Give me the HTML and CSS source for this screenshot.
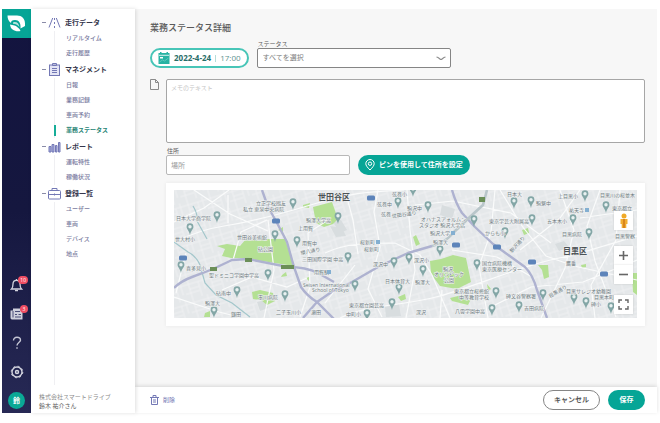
FILE: index.html
```html
<!DOCTYPE html>
<html lang="ja">
<head>
<meta charset="utf-8">
<meta name="viewport" content="width=device-width, initial-scale=1">
<title>業務ステータス詳細</title>
<link rel="stylesheet" href="styles.css">
</head>
<body>
<div class="app">
  <aside class="rail">
    <a class="logo" href="#" aria-label="ホーム">
      <svg width="19" height="19" viewBox="0 0 19 19"><path d="M.5 1.500H10c5 0 8 3.500 8 8V12l-4.500 2.500C14 9 12 6 8 6 5 6 4 7 4 9 1.500 7 .5 4.500.5 1.500z" fill="#fff"/><path d="M3 10.500l4.500 1c2 .5 3.500 2 5 3.500l1 2c-5 1-10-1-10.500-6.500z" fill="#fff"/><path d="M6 8.500c3-1.500 6 .5 6.500 4.500C11 11 9 10 6 9.800z" fill="#b5e4dd"/></svg>
    </a>
    <div class="rail-tools">
      <button class="tool" aria-label="通知">
        <svg width="13" height="14" viewBox="0 0 13 14" fill="none" stroke="#d3d4df" stroke-width="1.300"><path d="M1.500 11h10c-1-1-1.500-2-1.500-5 0-2-1.300-3.700-3.500-3.700S3 4 3 6c0 3-.5 4-1.500 5z"/><path d="M5 12.500h3M6.500 1v1"/></svg>
        <span class="badge">10</span>
      </button>
      <button class="tool" aria-label="お知らせ">
        <svg width="13" height="14" viewBox="0 0 13 14"><path d="M3 1.500h9.500v11H2c-1 0-1.500-1-1.500-2v-7H3z" fill="#cfd0dc"/><path d="M3 4v6.500M5 4.500h5M5 7.500h2M8.500 7.500H11M5 10h6" stroke="#4b4d78" fill="none"/></svg>
        <span class="badge">3</span>
      </button>
      <button class="tool" aria-label="ヘルプ">
        <svg width="10" height="14" viewBox="0 0 10 14" fill="none" stroke="#c4c5d4" stroke-width="1.400"><path d="M1.500 4.500c0-2 1.300-3.200 3.500-3.200s3.500 1.200 3.500 3S5 6.500 5 9.500"/><path d="M5 11.300v1.500"/></svg>
      </button>
      <button class="tool" aria-label="設定">
        <svg width="14" height="14" viewBox="0 0 14 14" fill="none" stroke="#d3d4df"><circle cx="7" cy="7" r="5" stroke-width="1.400"/><circle cx="7" cy="7" r="5.800" stroke-dasharray="2 2.550"/><circle cx="7" cy="7" r="1.500" stroke-width="1.500"/></svg>
      </button>
      <button class="avatar" aria-label="鈴木 祐介">鈴</button>
    </div>
  </aside>

  <nav class="nav">
    <section class="group">
      <button class="group-head"><span class="dash"></span>
        <svg width="13" height="13" viewBox="0 0 13 13" fill="none" stroke="#7378b5"><path d="M1 11.500L4.700 2M12 11.500L8.300 2M6.500 2v2M6.500 6v2M6.500 10v2"/></svg>走行データ</button>
      <ul><li><a href="#">リアルタイム</a></li><li><a href="#">走行履歴</a></li></ul>
    </section>
    <section class="group">
      <button class="group-head"><span class="dash"></span>
        <svg width="13" height="13" viewBox="0 0 13 13" fill="none" stroke="#7378b5"><rect x="1.500" y="2" width="10" height="10.500" fill="#e4e5f5"/><path d="M4.500 2.500v-2h4v2zM4 5.500h5M4 7.500h5M4 9.500h5"/></svg>マネジメント</button>
      <ul><li><a href="#">日報</a></li><li><a href="#">業務記録</a></li><li><a href="#">車両予約</a></li><li class="active"><a href="#" aria-current="page">業務ステータス</a></li></ul>
    </section>
    <section class="group">
      <button class="group-head"><span class="dash"></span>
        <svg width="13" height="13" viewBox="0 0 13 13" fill="#a9ace0" stroke="#7378b5"><path d="M1 6.500h2v5.500H1zM4 4.500h2V12H4zM7.500 5.500h1.500V12H7.500zM10.500 2.500H12V12h-1.500z"/></svg>レポート</button>
      <ul><li><a href="#">運転特性</a></li><li><a href="#">稼働状況</a></li></ul>
    </section>
    <section class="group group-last">
      <button class="group-head"><span class="dash"></span>
        <svg width="13" height="13" viewBox="0 0 13 13" fill="none" stroke="#7378b5"><rect x=".5" y="3.500" width="12" height="8.500" rx="1"/><path d="M4 3.500v-2h5v2M1 7.500h11M6.500 6.500v2"/></svg>登録一覧</button>
      <ul><li><a href="#">ユーザー</a></li><li><a href="#">車両</a></li><li><a href="#">デバイス</a></li><li><a href="#">地点</a></li></ul>
    </section>
    <div class="account"><p class="company">株式会社スマートドライブ</p><p>鈴木 祐介さん</p></div>
  </nav>

  <main class="main">
    <form class="content">
      <h1>業務ステータス詳細</h1>
      <div class="row">
        <button type="button" class="date">
          <svg width="12" height="12" viewBox="0 0 12 12"><path d="M.5 1H2V0h1.500v1h5V0H10v1h1.500v11H.5z" fill="#27b3a3"/><path d="M1 3.300h10" stroke="#d8f2ee"/><path d="M2 5h3v1.500H2z" fill="#fff"/><path d="M1.500 10l3-2 2 1 4-3" fill="none" stroke="#5cc7bb"/></svg>
          <b>2022-4-24</b><i></i><span>17:00</span>
        </button>
        <div class="field">
          <label for="status">ステータス</label>
          <div class="select">
            <select id="status"><option>すべてを選択</option></select>
            <svg width="10" height="5" viewBox="0 0 10 5" fill="none" stroke="#8d8d8d" stroke-width="1.200"><path d="M.5 1C3 1.500 4 3.500 5 3.500S7 1.500 9.500 1"/></svg>
          </div>
        </div>
      </div>
      <div class="memo">
        <svg width="9" height="11" viewBox="0 0 9 11" fill="none" stroke="#8a8a8a"><path d="M.5.5h5l3 3v7h-8z"/><path d="M5.500.5v3h3"/></svg>
        <textarea aria-label="メモ" placeholder="メモのテキスト"></textarea>
      </div>
      <div class="place">
        <div class="row">
          <div class="field">
            <label for="address">住所</label>
            <input id="address" type="text" placeholder="場所">
          </div>
          <button type="button" class="primary pin-button">
            <svg width="10" height="12" viewBox="0 0 10 12" fill="none" stroke="#fff"><path d="M5 11C2.500 8.500.8 6.500.8 4.700a4.200 4.200 0 0 1 8.400 0C9.200 6.500 7.500 8.500 5 11z"/><circle cx="5" cy="4.700" r="1.700"/></svg>
            ピンを使用して住所を設定
          </button>
        </div>
        <div class="map-card">
          <div class="map">
            <svg class="map-canvas" viewBox="174 190 463 128" role="img" aria-label="世田谷区・目黒区の地図">
              <defs>
                <pattern id="streets" width="23" height="19" patternUnits="userSpaceOnUse" patternTransform="rotate(-17)"><path d="M0 4h23M0 13h14M5 0v19M15 4v15M20 0v13M5 9h10" stroke="#f3f4f5" stroke-width=".7" fill="none"/></pattern>
                <g id="pin"><path d="M0 5C-1-.2-3.400-.5-3.400-3.300a3.400 3.400 0 0 1 6.800 0C3.400-.5 1-.2 0 5z" fill="#83a6a6"/><circle cy="-3.200" r="1.700" fill="#e9f1f1"/></g>
                <rect id="shield" x="-4" y="-2.500" width="8" height="5" rx="1.500" fill="#5d84ba"/>
              </defs>
              <path d="M174 190h463v128H174z" fill="#e5e8ea"/>
              <path d="M174 190h463v128H174z" fill="url(#streets)"/>
              <g fill="#d8dddf"><path d="M257 302l8-2 3 8-8 3zM330 226l12 2 4 8-10 1zM385 307l14-3 2 12-15 1zM442 205l13 4-3 10-12-4zM333 222l8-2 6 10-7 3zM555 244l9-3 5 6-10 4z"/></g>
              <g fill="#b4e093"><path d="M217 246l10-2 13 2 6-7 39 0 9 27-44-7-10-1-9 0-9-2 3-7z"/><path d="M313 207l19-5 6 17-5 5-9 3-8-4z"/><path d="M430 261l11-2 12-4 13 3 5 24-14 7-17-3-9-12z"/><path d="M252 292l8-2 13 3 2 8-8 4-6-5-8-1zM303 205l7-2-1 5-6-1zM413 237l3-2 4 9-4 2zM538 265h10l1 12-5 2-2-9zM522 230l6-2 1 5-5 2zM205 313l5-2v6h-6zM398 297l7-3 1 5-5 2zM450 298l12-3 9 4-3 6-16-4zM632 273h5v22l-4-3zM581 265l5-1v3l-4 1zM278 230l5-3v5zM306 278l3-1v4zM487 284l4 5-3 2zM282 275l4-3 1 4-6 1z"/></g>
              <g fill="none" stroke="#fafbfb" stroke-width="1.200">
                <path d="M174 242c15-7 30-13 50-16s50-10 90-22 55-12 90-14M194 190l36 24 38 17M228 195v28M233 260l8-28 26-12M174 297l45 15 20 5M174 222l30-14 25-18M345 190l8 30 5 34M300 317l10-30-2-54 20-13M325 253c20-10 45-10 70-10l25 12 12 20 18 43M378 190l-4 22 6 35-12 42 14 28M340 318c30-14 64-12 100-22s90-34 130-40l67-20M407 190l3 40 5 40-9 48M415 205l38-4 58 12 40 30M495 190l-4 42-12 34 9 52M500 190l22 36 24 30 28 10 63 14M520 250l40-32 20-28M560 190l14 40-9 38-24 50M600 190l-13 36 8 35 21 56M495 305l36-18 52-5 54-22M580 218l57-8M325 303l30-38M620 190l-4 50-25 45 4 33M440 318l2-28M186 253l-10 40M264 318l10-48-6-50M222 290l30-13 35 10 20-9M452 250l45 7 35 20"/>
              </g>
              <g fill="none" stroke="#86b8bd" stroke-width="1.200"><path d="M174 242l14 10q8 4 12 13l5 18 11 12 16 8 18 14M193 206q5 8 4 15l10 18" opacity=".7"/></g>
              <g fill="none" stroke="#aeb2d0" stroke-width="2.400" stroke-linejoin="round">
                <path d="M262 190l6 17 8 14 11 21 7 25 7 20q6 9 16 15l18 18"/>
                <path d="M174 288q7-7 18-11l21-8 19-9 16-1 40 8q18 0 30 6l16 9"/>
                <path d="M303 318l14-16 16-11 19-9 26-15 30-14 24-7"/>
                <path d="M452 190q4 14 10 23l13 14 18 17 32 23q8 8 12 23l10 28"/>
              </g>
              <path d="M432 246q13-3 21-13l19-18 11-10 4-15" fill="none" stroke="#b9c6ca" stroke-width="2.600"/>
              <g><use href="#shield" x="276" y="221"/><use href="#shield" x="183" y="258"/><use href="#shield" x="371" y="198"/><use href="#shield" x="456" y="245"/><use href="#shield" x="497" y="247"/><use href="#shield" x="532" y="262"/><use href="#shield" x="604" y="274"/></g>
              <path d="M210 267h7v4h-7zM245 258h7v4h-7zM281 265h13v4h-13zM479 197h6v5h-6z" fill="#6b8f58"/>
              <g><use href="#pin" x="217" y="218"/><use href="#pin" x="190" y="230"/><use href="#pin" x="293" y="205"/><use href="#pin" x="275" y="237"/><use href="#pin" x="297" y="243"/><use href="#pin" x="181" y="268"/><use href="#pin" x="268" y="276"/><use href="#pin" x="237" y="293"/><use href="#pin" x="285" y="297"/><use href="#pin" x="214" y="313"/><use href="#pin" x="413" y="192"/><use href="#pin" x="398" y="204"/><use href="#pin" x="428" y="208"/><use href="#pin" x="338" y="219"/><use href="#pin" x="474" y="222"/><use href="#pin" x="440" y="252"/><use href="#pin" x="348" y="259"/><use href="#pin" x="394" y="264"/><use href="#pin" x="409" y="260"/><use href="#pin" x="423" y="272"/><use href="#pin" x="355" y="287"/><use href="#pin" x="399" y="290"/><use href="#pin" x="392" y="305"/><use href="#pin" x="367" y="316"/><use href="#pin" x="477" y="266"/><use href="#pin" x="496" y="294"/><use href="#pin" x="492" y="311"/><use href="#pin" x="514" y="204"/><use href="#pin" x="531" y="203"/><use href="#pin" x="585" y="197"/><use href="#pin" x="606" y="208"/><use href="#pin" x="532" y="221"/><use href="#pin" x="573" y="221"/><use href="#pin" x="505" y="234"/><use href="#pin" x="589" y="235"/><use href="#pin" x="519" y="308"/><use href="#pin" x="543" y="296"/><use href="#pin" x="574" y="300"/><use href="#pin" x="586" y="304"/><use href="#pin" x="611" y="309"/></g>
              <g class="labels">
                <text x="256" y="205">立正学校鴎友</text><text x="243" y="211">私立 恵泉中央病院</text><text x="176" y="220">日本大学商学院</text><text x="175" y="241">世大村小</text><text x="237" y="239">世田谷美術館</text><text x="258" y="251">砧公園</text><text x="298" y="230">上用賀</text><text x="302" y="245">用賀中</text><text x="306" y="222">駒澤大学高</text><text x="302" y="261">三田国際学園 中高</text><text x="186" y="270">喜多見小</text><text x="209" y="277">聖ドミニコ学園中学高</text><text x="216" y="295">砧南中</text><text x="258" y="299">玉川病院</text><text x="205" y="305">駒澤大</text><text x="231" y="316">鎌田</text><text x="276" y="314">二子玉川小</text><text x="311" y="314">瀬田</text><text x="314" y="274">用賀駅</text>
                <text x="303" y="287">Seisen International</text><text x="312" y="292">School of Tokyo</text>
                <text x="392" y="196">弦巻小</text><text x="377" y="206">弦巻中</text><text x="381" y="216">弦巻</text><text x="407" y="210">駒沢中</text><text x="421" y="221">オハナスアォルムン</text><text x="419" y="227">スタジオ 駒沢大学店</text><text x="430" y="235">駒沢大学</text><text x="433" y="244">駒澤大</text><text x="360" y="244">桜新町</text><text x="364" y="251">桜新町</text><text x="373" y="266">深沢中</text><text x="414" y="262">深沢小</text><text x="443" y="271">駒沢</text><text x="434" y="276">オリンピック</text><text x="444" y="282">公園</text><text x="385" y="283">日本体育大</text><text x="415" y="284">駒澤大</text><text x="349" y="307">東京都立園芸高</text><text x="346" y="316">中町小</text><text x="416" y="314">深沢</text><text x="454" y="293">東京都立桜修館</text><text x="459" y="299">中等教育学校</text><text x="455" y="313">八雲学園中高</text><text x="482" y="265">国立病院機構</text><text x="482" y="271">東京医療センター</text>
                <text x="507" y="196">日本大</text><text x="536" y="205">駒繋中</text><text x="558" y="198">上目黒小</text><text x="600" y="197">目黒川の桜並木</text><text x="612" y="210">東京都立</text><text x="569" y="212">祐天寺</text><text x="489" y="223">東京学芸大附属高</text><text x="547" y="223">五本木小</text><text x="485" y="235">からも小</text><text x="562" y="236">目黒病院</text><text x="615" y="238">目黒警察</text><text x="566" y="265">鷹番</text><text x="566" y="293">目黒サレジオ幼稚園</text><text x="594" y="299">目黒本町</text><text x="506" y="298">碑文谷警察署</text><text x="524" y="310">吉田病院</text><text x="591" y="306">碑小</text>
                <text transform="translate(301 255) rotate(-12)">環八通り</text><text transform="translate(392 218) rotate(-8)">世田谷通り</text><text transform="translate(512 253) rotate(-48)">駒沢通り</text><text transform="translate(550 298) rotate(-30)">目黒通り</text>
                <g class="ward"><text x="318" y="200">世田谷区</text><text x="563" y="254">目黒区</text></g>
              </g>
              <g fill="#83afd1"><path d="M376 240h4v4h-4zM451 231h4v4h-4zM585 208h4v4h-4zM327 270h4v4h-4z"/></g>
            </svg>
            <div class="map-controls">
              <button type="button" class="control" aria-label="ストリートビュー"><svg width="12" height="16" viewBox="0 0 12 16"><circle cx="6" cy="3" r="2.500" fill="#f0aa27"/><path d="M2.500 6h7v5H8.300v4H3.700v-4H2.500z" fill="#f1ad30"/><path d="M5 6h2v9H5z" fill="#d9851d"/></svg></button>
              <div class="zoom"><button type="button" class="control" aria-label="拡大"><svg width="11" height="11" viewBox="0 0 11 11"><path d="M5.500 1v9M1 5.500h9" stroke="#666" stroke-width="1.600"/></svg></button><button type="button" class="control" aria-label="縮小"><svg width="11" height="11" viewBox="0 0 11 11"><path d="M1 5.500h9" stroke="#666" stroke-width="1.600"/></svg></button></div>
              <button type="button" class="control" aria-label="全画面"><svg width="11" height="11" viewBox="0 0 11 11" fill="none" stroke="#666" stroke-width="1.400"><path d="M1 4V1h3M7 1h3v3M10 7v3H7M4 10H1V7"/></svg></button>
            </div>
          </div>
        </div>
      </div>
    </form>
    <footer class="footer">
      <button class="delete"><svg width="9" height="10" viewBox="0 0 9 10" fill="none" stroke="#7378b5"><path d="M0 2.500h9M3 2V.5h3V2M1.500 3v6.500h6V3M3 5h3M3 7h3"/></svg>削除</button>
      <div class="actions"><button class="cancel">キャンセル</button><button class="primary save">保存</button></div>
    </footer>
  </main>
</div>
</body>
</html>
```

FILE: styles.css
```css
* { box-sizing: border-box; }

body {
  margin: 0;
  padding: 9px 3px 10px 2px;
  background: #fff;
  color: #5a5a5a;
  font: 7px/12px "Open Sans", "Noto Sans CJK JP", sans-serif;
}

button, input, select, textarea { font: inherit; color: inherit; margin: 0; }
button { display: flex; align-items: center; border: 0; padding: 0; background: none; cursor: pointer; }
a { color: inherit; text-decoration: none; }
h1, p, ul { margin: 0; padding: 0; }
ul { list-style: none; }
svg { display: block; flex: none; }

.app { display: flex; min-height: calc(100vh - 19px); }

.rail {
  display: flex;
  flex-direction: column;
  justify-content: space-between;
  width: 29px;
  background: linear-gradient(#13143f, #15173f 50%, #272955);
}
.logo { display: grid; place-items: center; height: 29px; background: #06a596; }
.rail-tools { display: flex; flex-direction: column; align-items: center; gap: 12px; padding-bottom: 4px; }
.tool { position: relative; justify-content: center; width: 17px; height: 17px; }
.badge {
  position: absolute;
  top: 0;
  right: -3px;
  min-width: 8px;
  padding: 0 2px;
  border-radius: 4px;
  background: #ef4d63;
  color: #fff;
  font-size: 5px;
  line-height: 8px;
  text-align: center;
}
.avatar { justify-content: center; width: 17px; height: 17px; border-radius: 50%; background: #0aa895; color: #fff; font-weight: 700; }

.nav {
  position: relative;
  display: flex;
  flex-direction: column;
  width: 104px;
  padding-top: 5px;
  background: #fff;
  box-shadow: 1px 0 4px #0002;
}
.group { padding-left: 11px; }
.group-last { display: flex; flex: 1; flex-direction: column; }
.group-last ul { flex: 1; }
.group-head { height: 17px; color: #35364c; font-weight: 700; white-space: nowrap; }
.group-head svg { margin-right: 4px; }
.dash { width: 4px; height: 1px; margin-right: 2px; background: #8a8ca8; }
.group ul { margin-left: 12px; padding-left: 11px; border-left: 1px solid #efeff2; }
.group li { position: relative; height: 15px; color: #7a7ba0; font-size: 6px; font-weight: 500; line-height: 15px; }
.group .active { color: #1f8474; font-weight: 700; }
.active::before { content: ""; position: absolute; top: 2px; left: -12px; width: 2px; height: 11px; background: #16ad98; }
.account { padding: 8px 0 2px 8px; font-size: 6px; line-height: 9px; white-space: nowrap; }
.company { color: #8b8b8b; }

.main { display: flex; flex: 1; flex-direction: column; min-width: 0; background: #f7f7f7; }
.content { display: flex; flex: 1; flex-direction: column; padding: 13px 12px 12px 15px; }
h1 { margin-bottom: 6px; font-size: 9px; font-weight: 500; line-height: 12px; }
.row { display: flex; align-items: flex-end; gap: 8px; }
.field { display: flex; flex-direction: column; }
.field label { padding-left: 1px; font-size: 6px; line-height: 8px; }

.date { gap: 4px; height: 20px; padding: 0 6px; border: 2px solid #47c5b7; border-radius: 10px; background: #fff; color: #5b9390; white-space: nowrap; }
.date b { color: #276c67; font-size: 8px; }
.date i { width: 1px; height: 7px; background: #b4ddd9; }
.date span { font-size: 8px; }

.select { position: relative; }
.select svg { position: absolute; top: 8px; right: 5px; pointer-events: none; }
select { display: block; width: 194px; height: 20px; padding: 0 5px; border: 1px solid #858585; border-radius: 2px; background: #fff; color: #808080; appearance: none; }

.memo { display: flex; gap: 7px; margin-top: 11px; }
textarea { flex: 1; min-width: 0; height: 64px; padding: 2px 4px; border: 1px solid #a6a6a6; border-radius: 2px; background: #fff; font-size: 6px; resize: none; }
textarea::placeholder { color: #c5c5c5; }

.place { margin: 4px 0 0 16px; }
input { width: 184px; height: 20px; padding: 0 4px; border: 1px solid #b8b8b8; border-radius: 2px; background: #fff; }
input::placeholder { color: #999; }
.primary { justify-content: center; height: 20px; border-radius: 10px; background: #06a596; color: #fff; font-weight: 700; white-space: nowrap; }
.pin-button { gap: 4px; padding: 0 7px; }

.map-card { margin-top: 8px; padding: 7px 8px 8px; background: #fff; box-shadow: 0 0 4px #0001; }
.map { position: relative; }
.map-canvas { width: 100%; height: auto; }
.labels { fill: #6e7b80; stroke: #f0f2f3; stroke-width: 1px; paint-order: stroke; font-size: 5px; }
.ward { fill: #4e5457; font-size: 8px; font-weight: 700; }
.map-controls { position: absolute; right: 4px; bottom: 4px; display: flex; flex-direction: column; gap: 11px; }
.control { justify-content: center; width: 19px; height: 19px; background: #fff; box-shadow: 0 0 2px #0002; }
.zoom { margin-top: 5px; }

.footer { display: flex; align-items: center; justify-content: space-between; min-height: 26px; padding: 0 12px 0 15px; background: #fff; box-shadow: 0 -1px 4px #0002; }
.delete { gap: 4px; color: #7378b5; font-size: 6px; }
.actions { display: flex; gap: 8px; }
.cancel { justify-content: center; width: 57px; height: 20px; border: 1px solid #858585; border-radius: 10px; background: #fff; font-weight: 700; }
.save { width: 37px; }
```
